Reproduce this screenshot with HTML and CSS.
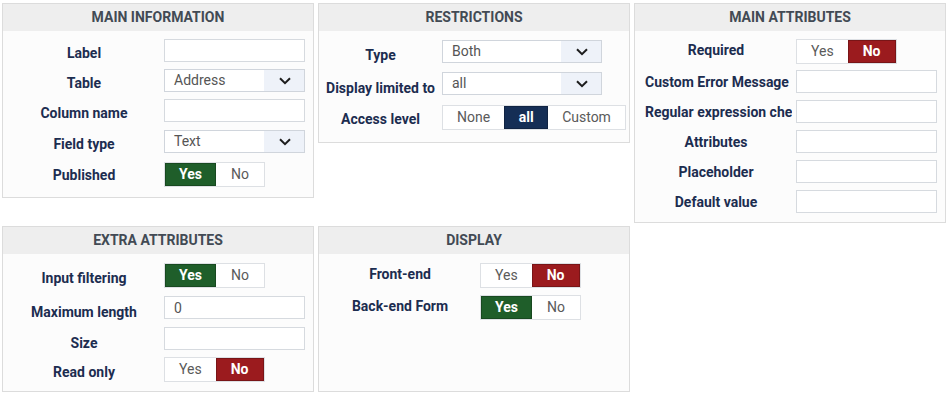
FILE: index.html
```html
<!DOCTYPE html>
<html>
<head>
<meta charset="utf-8">
<link rel="stylesheet" href="styles.css">
</head>
<body>
<div class="page">
  <div class="line line-top">
    <section class="panel p-main">
      <h2 class="panel-head">Main Information</h2>
      <div class="panel-body pt8 pb10">
        <div class="row"><label class="lbl">Label</label><input class="field" type="text"></div>
        <div class="row mt7"><label class="lbl">Table</label><div class="select"><span class="sel-text">Address</span><span class="sel-btn"><svg width="12" height="8" viewBox="0 0 12 8"><path d="M1 1.2 L6 6.2 L11 1.2" fill="none" stroke="#1d1d1d" stroke-width="2"/></svg></span></div></div>
        <div class="row mt7"><label class="lbl">Column name</label><input class="field" type="text"></div>
        <div class="row mt8"><label class="lbl">Field type</label><div class="select"><span class="sel-text">Text</span><span class="sel-btn"><svg width="12" height="8" viewBox="0 0 12 8"><path d="M1 1.2 L6 6.2 L11 1.2" fill="none" stroke="#1d1d1d" stroke-width="2"/></svg></span></div></div>
        <div class="row tall mt9"><label class="lbl lbl-tog">Published</label><div class="seg"><span class="opt on-green">Yes</span><span class="opt">No</span></div></div>
      </div>
    </section>

    <section class="panel p-restrict">
      <h2 class="panel-head">Restrictions</h2>
      <div class="panel-body pt9 pb12">
        <div class="row"><label class="lbl">Type</label><div class="select wide"><span class="sel-text">Both</span><span class="sel-btn"><svg width="12" height="8" viewBox="0 0 12 8"><path d="M1 1.2 L6 6.2 L11 1.2" fill="none" stroke="#1d1d1d" stroke-width="2"/></svg></span></div></div>
        <div class="row mt9"><label class="lbl lbl-low">Display limited to</label><div class="select wide"><span class="sel-text">all</span><span class="sel-btn"><svg width="12" height="8" viewBox="0 0 12 8"><path d="M1 1.2 L6 6.2 L11 1.2" fill="none" stroke="#1d1d1d" stroke-width="2"/></svg></span></div></div>
        <div class="row tall mt10"><label class="lbl lbl-tog">Access level</label><div class="seg"><span class="opt">None</span><span class="opt on-navy">all</span><span class="opt">Custom</span></div></div>
      </div>
    </section>

    <section class="panel p-attr">
      <h2 class="panel-head">Main Attributes</h2>
      <div class="panel-body pt8 pb9">
        <div class="row tall"><label class="lbl lbl-tog">Required</label><div class="seg"><span class="opt">Yes</span><span class="opt on-red">No</span></div></div>
        <div class="row mt6"><label class="lbl">Custom Error Message</label><input class="field" type="text"></div>
        <div class="row mt7"><label class="lbl">Regular expression check</label><input class="field" type="text"></div>
        <div class="row mt7"><label class="lbl">Attributes</label><input class="field" type="text"></div>
        <div class="row mt7"><label class="lbl">Placeholder</label><input class="field" type="text"></div>
        <div class="row mt7"><label class="lbl">Default value</label><input class="field" type="text"></div>
      </div>
    </section>
  </div>

  <div class="line line-bottom">
    <section class="panel p-extra">
      <h2 class="panel-head">Extra Attributes</h2>
      <div class="panel-body pt9 pb9">
        <div class="row tall"><label class="lbl lbl-tog">Input filtering</label><div class="seg"><span class="opt on-green">Yes</span><span class="opt">No</span></div></div>
        <div class="row mt8"><label class="lbl lbl-low">Maximum length</label><input class="field" type="text" value="0"></div>
        <div class="row mt8"><label class="lbl lbl-low">Size</label><input class="field" type="text"></div>
        <div class="row tall mt7"><label class="lbl lbl-tog">Read only</label><div class="seg"><span class="opt">Yes</span><span class="opt on-red">No</span></div></div>
      </div>
    </section>

    <section class="panel p-display">
      <h2 class="panel-head">Display</h2>
      <div class="panel-body pt9">
        <div class="row tall"><label class="lbl">Front-end</label><div class="seg"><span class="opt">Yes</span><span class="opt on-red">No</span></div></div>
        <div class="row tall mt7"><label class="lbl">Back-end Form</label><div class="seg"><span class="opt on-green">Yes</span><span class="opt">No</span></div></div>
      </div>
    </section>
  </div>
</div>
</body>
</html>
```

FILE: styles.css
```css
* { box-sizing: border-box; }

body {
  margin: 0;
  background: #ffffff;
  font-family: Roboto, "Liberation Sans", Arial, sans-serif;
  font-size: 14px;
}

.page {
  padding: 3px 0 0 2px;
}

.line {
  display: flex;
  gap: 4px;
}

.line-top {
  align-items: flex-start;
  margin-bottom: 3px;
}

.line-bottom {
  align-items: stretch;
}

.panel {
  width: 312px;
  border: 1px solid #dcdcdc;
  background: #fcfcfc;
  display: flex;
  flex-direction: column;
}

.panel-head {
  margin: 0;
  height: 27px;
  line-height: 27px;
  background: #eeeeee;
  color: #424a54;
  font-size: 14px;
  font-weight: 700;
  text-align: center;
  text-transform: uppercase;
}

.panel-body {
  display: flex;
  flex-direction: column;
  flex: 1;
}

.pt8 { padding-top: 8px; }
.pt9 { padding-top: 9px; }
.pb9 { padding-bottom: 9px; }
.pb10 { padding-bottom: 10px; }
.pb12 { padding-bottom: 12px; }

.row {
  display: flex;
  align-items: flex-start;
  height: 23px;
}

.row.tall { height: 25px; }

.mt6 { margin-top: 6px; }
.mt7 { margin-top: 7px; }
.mt8 { margin-top: 8px; }
.mt9 { margin-top: 9px; }
.mt10 { margin-top: 10px; }

.lbl {
  flex: none;
  width: 157px;
  margin-right: 4px;
  padding: 4px 5px 0 10px;
  line-height: 20px;
  color: #1c2d50;
  font-weight: 700;
  text-align: center;
  white-space: nowrap;
}

.p-main .lbl-tog { padding-top: 3px; }

.p-restrict .lbl {
  width: 123px;
  margin-right: 0;
  padding: 5px 0 0 0;
}
.p-restrict .lbl-low { padding-top: 6px; }
.p-restrict .lbl-tog { padding-top: 4px; }

.p-attr .lbl {
  padding-top: 2px;
  height: 23px;
  overflow: hidden;
}
.p-attr .lbl-tog { padding-top: 1px; }

.p-extra .lbl { padding-top: 5px; }
.p-extra .lbl-low { padding-top: 6px; }

.p-display .lbl { padding-top: 1px; }

.field {
  width: 141px;
  height: 23px;
  margin: 0;
  border: 1px solid #d6dadf;
  background: #ffffff;
  padding: 0 9px;
  font-family: Roboto, "Liberation Sans", Arial, sans-serif;
  font-size: 14px;
  color: #555555;
  outline: none;
}

.select {
  width: 141px;
  height: 23px;
  border: 1px solid #d0d5dc;
  background: #ffffff;
  display: flex;
  align-items: stretch;
}

.select.wide { width: 160px; }

.sel-text {
  flex: 1;
  padding-left: 9px;
  line-height: 21px;
  color: #555555;
}

.sel-btn {
  width: 40px;
  background: #eef2f9;
  display: flex;
  align-items: center;
  justify-content: center;
  padding-left: 1px;
}

.seg {
  display: flex;
  height: 25px;
  border: 1px solid #dde0e4;
  background: #ffffff;
}

.opt {
  min-width: 48px;
  padding: 0 14px;
  line-height: 23px;
  text-align: center;
  color: #5a5a5a;
  font-size: 14px;
}

.on-green,
.on-red,
.on-navy {
  color: #ffffff;
  font-weight: 700;
  box-shadow: inset 0 0 0 1px rgba(0, 0, 0, 0.22);
}

.on-navy { min-width: 44px; }

.on-green { background: #1f5e2a; }
.on-red { background: #9b1b1e; }
.on-navy { background: #152e55; }
```
